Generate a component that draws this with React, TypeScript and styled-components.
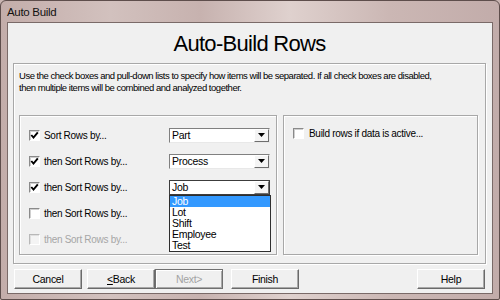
import React from "react";
import styled, { createGlobalStyle, css } from "styled-components";

const Global = createGlobalStyle`
  html, body { margin: 0; padding: 0; background: #c9b5b2; }
  body { font-family: "Liberation Sans", Arial, sans-serif; }
`;

const Window = styled.div`
  width: 500px;
  height: 300px;
  box-sizing: border-box;
  border: 1px solid #5e4e4c;
  border-radius: 6px 6px 2px 2px;
  background: linear-gradient(90deg, #c3adaa 0%, #d2c1be 22%, #c7b2af 40%, #dfd1ce 58%, #cbb7b4 78%, #c2acaa 100%);
  display: flex;
  flex-direction: column;
  padding: 0 6px 5px 6px;
  overflow: hidden;
`;

const TitleBar = styled.div`
  height: 21px;
  display: flex;
  align-items: center;
  font-size: 11.5px;
  letter-spacing: -0.3px;
  color: #111;
`;

const Client = styled.div`
  flex: 1;
  border: 1px solid #7a6a68;
  background: #f0f0f0;
  display: flex;
  flex-direction: column;
  padding: 0 6px 0 5px;
  min-height: 0;
`;

const Heading = styled.div`
  height: 40px;
  display: flex;
  align-items: center;
  justify-content: center;
  padding-top: 2px;
  box-sizing: border-box;
  font-size: 22px;
  letter-spacing: -0.7px;
  color: #000;
`;

const etched = css`
  border: 1px solid #a8a8a8;
  box-shadow: inset 1px 1px 0 #ffffff, 1px 1px 0 #ffffff;
`;

const small = css`
  font-size: 10px;
  letter-spacing: -0.3px;
`;

const OuterGroup = styled.div`
  ${etched};
  height: 201px;
  box-sizing: border-box;
  padding: 6px 7px 8px 5px;
  display: flex;
  flex-direction: column;
`;

const Desc = styled.p`
  margin: 0 0 21px 0;
  font-size: 9.5px;
  letter-spacing: -0.48px;
  line-height: 12px;
  white-space: nowrap;
  color: #000;
`;

const Groups = styled.div`
  display: grid;
  grid-template-columns: 258px 1fr;
  column-gap: 6px;
  flex: 1;
`;

const Group = styled.div<{ $top: number }>`
  ${etched};
  position: relative;
  padding: ${(p) => p.$top}px 6px 0 9px;
  display: flex;
  flex-direction: column;
`;

const Row = styled.div`
  height: 26px;
  display: grid;
  grid-template-columns: 11px 1fr 101px;
  column-gap: 4px;
  align-items: center;
  position: relative;
`;

const SingleRow = styled.div`
  height: 26px;
  display: flex;
  gap: 5px;
  align-items: center;
`;

const Box = styled.span<{ $disabled?: boolean }>`
  width: 11px;
  height: 11px;
  box-sizing: border-box;
  border-top: 1px solid ${(p) => (p.$disabled ? "#b8b8b8" : "#8a8a8a")};
  border-left: 1px solid ${(p) => (p.$disabled ? "#b8b8b8" : "#8a8a8a")};
  border-right: 1px solid #fff;
  border-bottom: 1px solid #fff;
  background: ${(p) => (p.$disabled ? "#f4f4f4" : "#fff")};
  box-shadow: inset 1px 1px 0 ${(p) => (p.$disabled ? "#e0e0e0" : "#cfcfcf")};
  display: flex;
  align-items: center;
  justify-content: center;
`;

const Label = styled.span<{ $disabled?: boolean }>`
  ${small};
  color: ${(p) => (p.$disabled ? "#a6a6a6" : "#000")};
  white-space: nowrap;
`;

const Combo = styled.div<{ $focus?: boolean }>`
  height: 15px;
  box-sizing: border-box;
  background: #fff;
  border-top: 1px solid ${(p) => (p.$focus ? "#3c3c3c" : "#808080")};
  border-left: 1px solid ${(p) => (p.$focus ? "#3c3c3c" : "#808080")};
  border-right: 1px solid ${(p) => (p.$focus ? "#3c3c3c" : "#e8e8e8")};
  border-bottom: 1px solid ${(p) => (p.$focus ? "#3c3c3c" : "#e8e8e8")};
  display: flex;
  align-items: stretch;
`;

const ComboText = styled.span`
  flex: 1;
  font-size: 10.5px;
  letter-spacing: -0.3px;
  line-height: 13px;
  padding-left: 2px;
  color: #000;
`;

const ComboButton = styled.span`
  width: 15px;
  box-sizing: border-box;
  background: #f4f4f4;
  border-left: 1px solid #fff;
  border-top: 1px solid #fff;
  border-right: 1px solid #6e6e6e;
  border-bottom: 1px solid #6e6e6e;
  display: flex;
  align-items: center;
  justify-content: center;
`;

const ListBox = styled.div`
  position: absolute;
  left: 140px;
  top: 21px;
  width: 102px;
  box-sizing: border-box;
  border: 1px solid #2e2e2e;
  background: #fff;
  z-index: 2;
`;

const ListItem = styled.div<{ $sel?: boolean }>`
  height: 11px;
  font-size: 10.5px;
  letter-spacing: -0.3px;
  line-height: 11px;
  padding-left: 2px;
  color: ${(p) => (p.$sel ? "#fff" : "#000")};
  background: ${(p) => (p.$sel ? "#3399ff" : "transparent")};
`;

const ButtonBar = styled.div`
  display: flex;
  align-items: center;
  margin: 5px 1px 0 1px;
`;

const Btn = styled.div<{ $gap?: number; $disabled?: boolean; $push?: boolean }>`
  width: 68px;
  height: 20px;
  box-sizing: border-box;
  margin-left: ${(p) => (p.$push ? "auto" : `${p.$gap ?? 0}px`)};
  background: #f0f0f0;
  border-top: 1px solid #ffffff;
  border-left: 1px solid #ffffff;
  border-right: 1px solid #6a6a6a;
  border-bottom: 1px solid #6a6a6a;
  box-shadow: inset -1px -1px 0 #a8a8a8;
  display: flex;
  align-items: center;
  justify-content: center;
  ${small};
  font-size: 10.5px;
  color: ${(p) => (p.$disabled ? "#a3a3a3" : "#000")};
  ${(p) =>
    p.$disabled &&
    css`
      border: 1px solid #707070;
      box-shadow: inset 1px 1px 0 #fff, inset -1px -1px 0 #a8a8a8;
    `}
`;

const U = styled.span`
  text-decoration: underline;
`;

const Check = () => (
  <svg width="9" height="9" viewBox="0 0 9 9">
    <path d="M1.3 4 L3.5 6.6 L7.8 1.4" fill="none" stroke="#000" strokeWidth="1.9" />
  </svg>
);

const Arrow = () => (
  <svg width="7" height="4" viewBox="0 0 7 4">
    <path d="M0 0 H7 L3.5 4 Z" fill="#000" />
  </svg>
);

type RowData = { label: string; checked: boolean; disabled?: boolean; value?: string; focus?: boolean; open?: boolean };

const rows: RowData[] = [
  { label: "Sort Rows by...", checked: true, value: "Part" },
  { label: "then Sort Rows by...", checked: true, value: "Process" },
  { label: "then Sort Rows by...", checked: true, value: "Job", focus: true, open: true },
  { label: "then Sort Rows by...", checked: false },
  { label: "then Sort Rows by...", checked: false, disabled: true },
];

const options = ["Job", "Lot", "Shift", "Employee", "Test"];

export default function App() {
  return (
    <>
      <Global />
      <Window>
        <TitleBar>Auto Build</TitleBar>
        <Client>
          <Heading>Auto-Build Rows</Heading>
          <OuterGroup>
            <Desc>
              Use the check boxes and pull-down lists to specify how items will be separated. If all check boxes are disabled,
              <br />
              then multiple items will be combined and analyzed together.
            </Desc>
            <Groups>
              <Group $top={6}>
                {rows.map((r, i) => (
                  <Row key={i}>
                    <Box $disabled={r.disabled}>{r.checked && <Check />}</Box>
                    <Label $disabled={r.disabled}>{r.label}</Label>
                    {r.value ? (
                      <Combo $focus={r.focus}>
                        <ComboText>{r.value}</ComboText>
                        <ComboButton>
                          <Arrow />
                        </ComboButton>
                      </Combo>
                    ) : (
                      <span />
                    )}
                    {r.open && (
                      <ListBox>
                        {options.map((o, j) => (
                          <ListItem key={o} $sel={j === 0}>
                            {o}
                          </ListItem>
                        ))}
                      </ListBox>
                    )}
                  </Row>
                ))}
              </Group>
              <Group $top={4}>
                <SingleRow>
                  <Box />
                  <Label>Build rows if data is active...</Label>
                </SingleRow>
              </Group>
            </Groups>
          </OuterGroup>
          <ButtonBar>
            <Btn>Cancel</Btn>
            <Btn $gap={5}>
              <U>&lt;</U>Back
            </Btn>
            <Btn $disabled>Next&gt;</Btn>
            <Btn $gap={8}>Finish</Btn>
            <Btn $push>Help</Btn>
          </ButtonBar>
        </Client>
      </Window>
    </>
  );
}
